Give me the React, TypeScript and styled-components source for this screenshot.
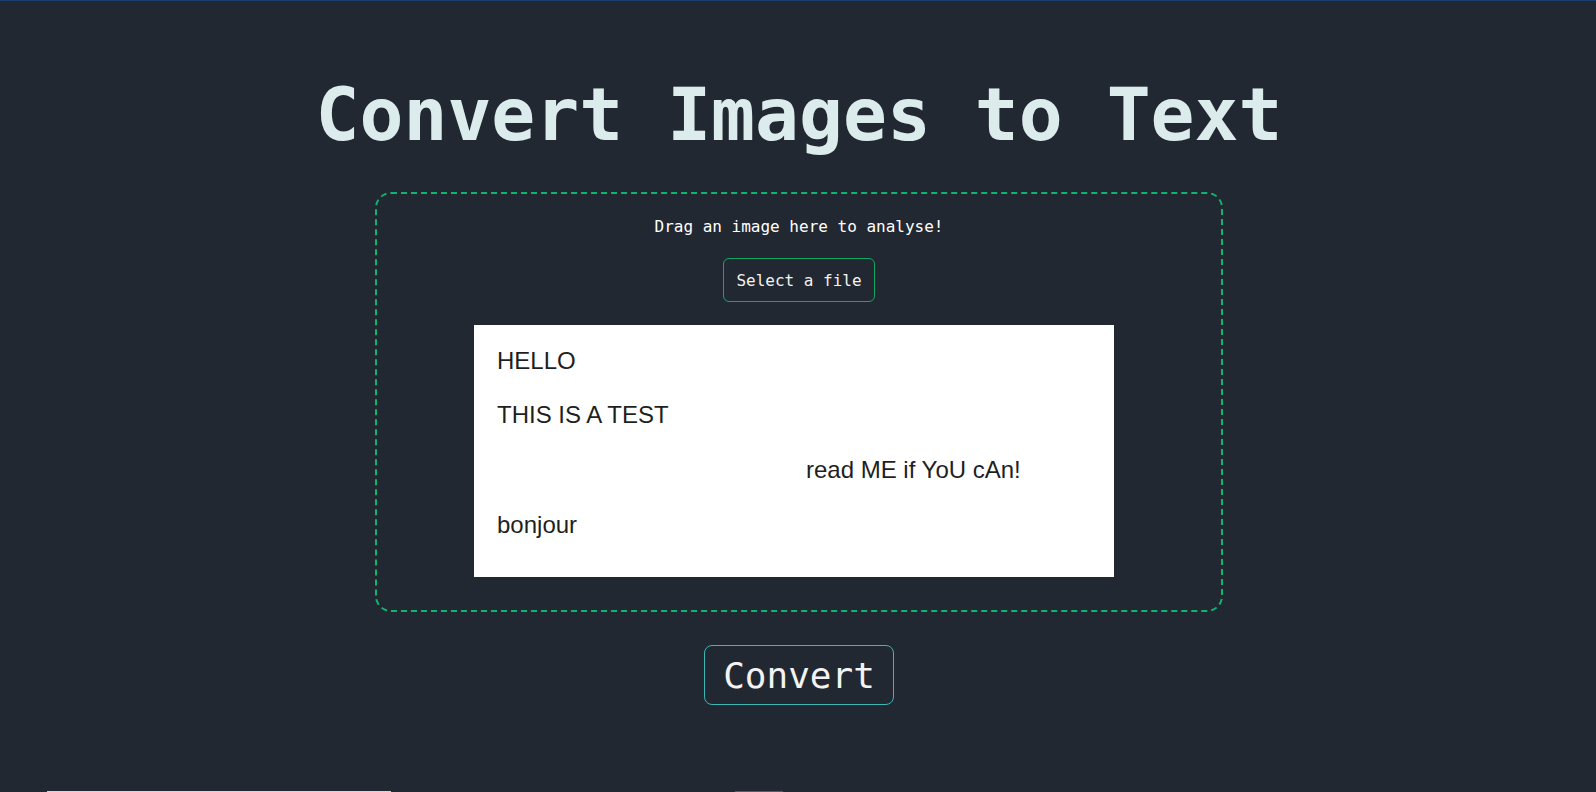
import React from "react";
import styled, { createGlobalStyle } from "styled-components";

const GlobalStyle = createGlobalStyle`
  html, body {
    margin: 0;
    padding: 0;
    background: #222831;
  }
  * { box-sizing: border-box; }
`;

const Page = styled.div`
  min-height: 100vh;
  background: #222831;
  border-top: 1px solid #1c3b6e;
  display: flex;
  flex-direction: column;
  align-items: center;
  padding: 71px 0 0 2px;
  font-family: "DejaVu Sans Mono", "Liberation Mono", monospace;
  overflow: hidden;
`;

const Title = styled.h1`
  margin: 0;
  font-size: 73px;
  font-weight: bold;
  line-height: normal;
  color: #dcecec;
  letter-spacing: 0;
`;

const DropZone = styled.div`
  margin-top: 35px;
  width: 848px;
  border: 2px dashed #10b46c;
  border-radius: 16px;
  padding: 23px 0 33px;
  display: flex;
  flex-direction: column;
  align-items: center;
`;

const Hint = styled.p`
  margin: 0;
  font-size: 16px;
  line-height: normal;
  color: #ffffff;
`;

const SelectButton = styled.button`
  margin-top: 22px;
  height: 44px;
  padding: 0 12px;
  border: 1px solid #12a765;
  border-radius: 6px;
  background: transparent;
  color: #f2f2f2;
  font-family: inherit;
  font-size: 16px;
  cursor: pointer;
`;

const Preview = styled.div`
  margin-top: 23px;
  margin-right: 10px;
  width: 640px;
  height: 252px;
  background: #ffffff;
  padding: 8.5px 23px 0;
  font-family: "Liberation Sans", Arial, sans-serif;
  font-size: 24px;
  color: #1f1f1f;
`;

const PreviewLine = styled.div<{ $indent?: number }>`
  line-height: 54.7px;
  padding-left: ${(p) => p.$indent ?? 0}px;
  white-space: nowrap;
`;

const ConvertButton = styled.button`
  margin-top: 33px;
  height: 60px;
  padding: 0 18px;
  border: 1px solid #3ab6b6;
  border-radius: 8px;
  background: transparent;
  color: #f3f3f3;
  font-family: inherit;
  font-size: 36px;
  cursor: pointer;
`;

const Results = styled.div`
  margin-top: 86px;
  align-self: stretch;
  display: flex;
  align-items: flex-start;
  padding-left: 45px;
  gap: 344px;
`;

const ResultText = styled.div`
  width: 344px;
  height: 120px;
  background: #d4d4d4;
`;

const CopyButton = styled.div`
  width: 48px;
  height: 30px;
  background: #5a5a5a;
`;

export default function App() {
  return (
    <>
      <GlobalStyle />
      <Page>
        <Title>Convert Images to Text</Title>
        <DropZone>
          <Hint>Drag an image here to analyse!</Hint>
          <SelectButton>Select a file</SelectButton>
          <Preview>
            <PreviewLine>HELLO</PreviewLine>
            <PreviewLine>THIS IS A TEST</PreviewLine>
            <PreviewLine $indent={309}>read ME if YoU cAn!</PreviewLine>
            <PreviewLine>bonjour</PreviewLine>
          </Preview>
        </DropZone>
        <ConvertButton>Convert</ConvertButton>
        <Results>
          <ResultText />
          <CopyButton />
        </Results>
      </Page>
    </>
  );
}
